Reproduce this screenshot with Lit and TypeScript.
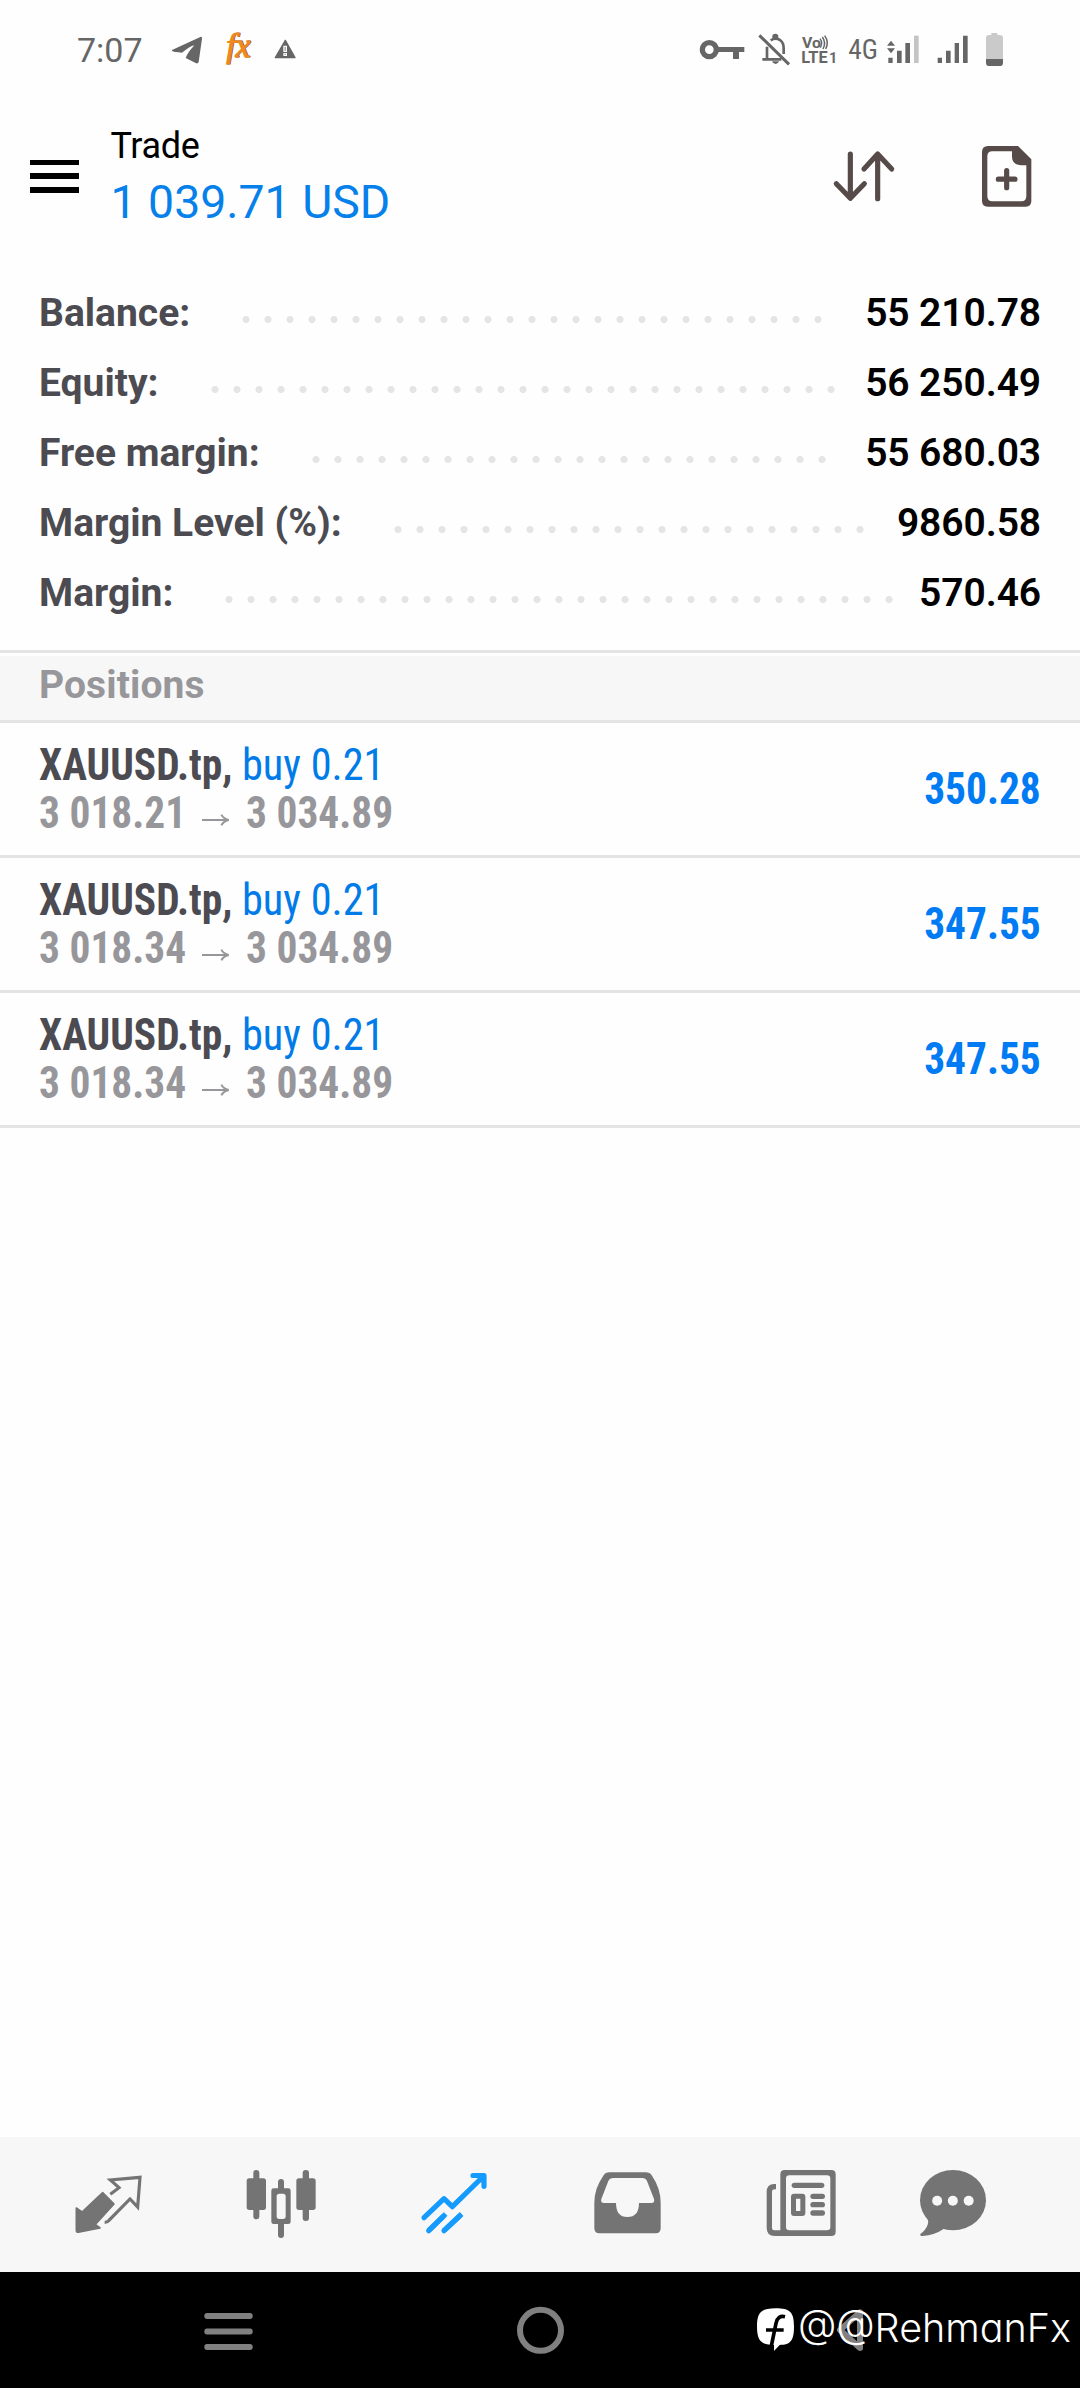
import { LitElement, html, css, svg, TemplateResult, SVGTemplateResult } from "lit";
import { customElement } from "lit/decorators.js";

interface SummaryRow { label: string; value: string; dots: number; }
interface Position { symbol: string; side: string; open: string; current: string; profit: string; }

const SUMMARY: SummaryRow[] = [
  { label: "Balance:", value: "55 210.78", dots: 27 },
  { label: "Equity:", value: "56 250.49", dots: 29 },
  { label: "Free margin:", value: "55 680.03", dots: 24 },
  { label: "Margin Level (%):", value: "9860.58", dots: 22 },
  { label: "Margin:", value: "570.46", dots: 31 },
];

const POSITIONS: Position[] = [
  { symbol: "XAUUSD.tp,", side: "buy 0.21", open: "3 018.21", current: "3 034.89", profit: "350.28" },
  { symbol: "XAUUSD.tp,", side: "buy 0.21", open: "3 018.34", current: "3 034.89", profit: "347.55" },
  { symbol: "XAUUSD.tp,", side: "buy 0.21", open: "3 018.34", current: "3 034.89", profit: "347.55" },
];

/* Icons are drawn on a grid of three units per pixel. */
const icon = (x: number, y: number, w: number, h: number, body: SVGTemplateResult, cls = ""): TemplateResult =>
  html`<svg class=${cls} width=${w} height=${h} viewBox="${x} ${y} ${w * 3} ${h * 3}">${body}</svg>`;

const statusLeft = icon(45, -60, 150, 100, svg`
  <path fill="#666" d="M66 90 L151 51 Q157 49 156 56 L146 126 Q143 133 137 129 L107 114 Q112 98 132 77 Q128 73 96 98 L86 97 Q74 97 66 93 Z"/>
  <text x="231" y="112" class="fx fx-shadow" textLength="72" lengthAdjust="spacingAndGlyphs">fx</text>
  <text x="229" y="110" class="fx" textLength="72" lengthAdjust="spacingAndGlyphs">fx</text>
  <path fill="#666" stroke="#666" stroke-width="4" stroke-linejoin="round" d="M406 61 L435 113 H376 Z"/>
  <path fill="#fff" d="M400 77h11v19h-11zM400 99h11v9h-11z"/>
  <path fill="#888" d="M404 80h3v13h-3zM404 101h3v4h-3z"/>`);

const statusRight = icon(27, -60, 310, 100, svg`
  <g fill="#666">
    <circle cx="58" cy="89" r="21" fill="none" stroke="#666" stroke-width="16"/>
    <path d="M82 81h81v15h-16v21h-18v-21h-47z"/>
    <g fill="none" stroke="#666" stroke-width="8">
      <path d="M217 118H274M231 118V80M242 61Q256 52 270 60Q281 68 281 84V102"/>
      <path d="M208 46L297 133" stroke-width="9"/>
    </g>
    <path d="M247 58V49a9 8 0 0 1 18 0V58zM246 124h21q-2 8-10 8t-11-8z"/>
    <text x="336" y="84" class="vo" textLength="57" lengthAdjust="spacingAndGlyphs">Vo</text>
    <path d="M390 56Q399 68 391 83M397 51Q409 67 399 87M404 47Q418 66 407 87" fill="none" stroke="#666" stroke-width="4.500"/>
    <text x="334" y="129" class="lte" textLength="79" lengthAdjust="spacingAndGlyphs">LTE</text>
    <text x="417" y="129" class="one" textLength="25" lengthAdjust="spacingAndGlyphs">1</text>
    <text x="475" y="118" class="net" textLength="89" lengthAdjust="spacingAndGlyphs">4G</text>
    <path d="M603 62l12 15h-24zM603 100l12-15h-24zM595 113h13v16h-13zM621 92h14v37h-14zM646 69h14v60h-14z"/>
    <path fill="#c4c4c4" d="M672 47h14v82h-14z"/>
    <path d="M743 113h13v16h-13zM768 92h14v37h-14zM794 69h13v60h-13zM819 47h14v82h-14z"/>
    <path fill="#cacaca" d="M888 118V55q0-10 10-10h6v-6h18v6h7q10 0 10 10v63z"/>
    <path d="M888 117h51v11q0 10-10 10h-31q-10 0-10-10z"/>
  </g>`);

const sortIcon = icon(516, 437, 69, 60, svg`
  <path fill="none" stroke="#564b48" stroke-width="15.500" stroke-linecap="round" stroke-linejoin="round"
    d="M574 461V593M532 550L574 594L616 550M656 595V462M615 506L656 461L698 506"/>`);

const newOrderIcon = icon(961, 428, 57, 66, svg`
  <path fill="#564b48" fill-rule="evenodd" d="M988 437H1078L1118 477V602Q1118 619 1101 619H987Q970 619 970 602V455Q970 437 988 437ZM1001 453Q986 453 986 468V588Q986 603 1001 603H1088Q1103 603 1103 588V495H1086Q1061 493 1060 470V453Z"/>
  <path fill="none" stroke="#564b48" stroke-width="15.500" stroke-linecap="round" d="M1044 511V562M1019 536.500H1069"/>`);

const arrow = icon(0, 0, 29, 14, svg`
  <path d="M0 21H78M58 5Q64 17 80 21Q64 25 58 37" fill="none" stroke="#97979b" stroke-width="6"/>`);

const quotes = icon(-54, 21, 173, 135, svg`
  <path fill="#747474" stroke="#747474" stroke-width="5" stroke-linejoin="round"
    d="M188 188L222 222L166 283L180 294L115 306.500Q109 307 109 301V234L126 246Z"/>
  <path fill="none" stroke="#747474" stroke-width="9.500" d="M194 277Q203 277 207 271L270 207L293 231L300 142L211 150L237 173L211 193"/>`);

const charts = icon(465, 21, 173, 135, svg`
  <g fill="#747474">
    <rect x="620" y="145" width="58" height="95" rx="8"/><rect x="640" y="120" width="18" height="148" rx="9"/>
    <rect x="769" y="145" width="58" height="95" rx="8"/><rect x="788" y="120" width="19" height="153" rx="9"/>
    <rect x="714" y="147" width="18" height="40" rx="9"/><rect x="714" y="270" width="18" height="54" rx="9"/>
    <rect x="694" y="175" width="58" height="107" rx="7"/>
    <rect x="710" y="191" width="27" height="76" rx="8" fill="#f7f7f7"/>
  </g>`);

const trade = icon(984, 21, 173, 135, svg`
  <g fill="none" stroke="#149bfd" stroke-width="15.500">
    <path stroke-linecap="round" stroke-linejoin="round" d="M1152 263L1212 206L1237 230L1328 141M1299 136.500H1332V169"/>
    <path d="M1310 140H1328V158Z" fill="#149bfd" stroke-width="4"/>
    <path d="M1166 302L1217 252M1212 302L1265 252"/>
    <path stroke-linecap="round" d="M1166 302L1210 259M1212 302L1258 259"/>
  </g>`);

const history = icon(-57, 21, 173, 135, svg`
  <path fill="#747474" fill-rule="evenodd" d="M148 127H257Q269 127 276 137Q302 175 302 218V295Q302 310 287 310H118Q103 310 103 295V218Q103 175 130 137Q137 127 148 127ZM160 144Q149 144 145 153L124 207Q121 219 132 219H168Q168 261 202 261Q237 261 237 219H274Q285 219 282 207L261 153Q257 144 247 144Z"/>`);

const news = icon(462, 21, 173, 135, svg`
  <g fill="#747474">
    <path d="M648 162V178H644Q636 178 636 186V294Q636 301 643 301H664V318H644Q620 318 620 293V186Q620 162 643 162Z"/>
    <path fill-rule="evenodd" d="M674 120H814Q827 120 827 133V305Q827 318 814 318H661V133Q661 120 674 120ZM688 136Q678 136 678 146V291Q678 301 688 301H801Q811 301 811 291V146Q811 136 801 136Z"/>
    <rect x="695" y="158" width="98" height="16" rx="8"/>
    <path fill-rule="evenodd" d="M702 191H727Q736 191 736 200V249Q736 258 727 258H702Q693 258 693 249V200Q693 191 702 191ZM708 206V243H721V206Z"/>
    <rect x="751" y="191" width="44" height="16" rx="8"/><rect x="751" y="216" width="44" height="16" rx="8"/><rect x="751" y="241" width="44" height="16" rx="8"/>
  </g>`);

const chat = icon(981, 21, 131, 135, svg`
  <g fill="#747474">
    <ellipse cx="1179" cy="210.500" rx="99" ry="90.500"/>
    <path d="M1098 262Q1108 271 1103 284Q1097 301 1081 312Q1079 318 1088 318Q1124 315 1152 296Z"/>
    <g fill="#f7f7f7"><circle cx="1131.500" cy="212" r="15"/><circle cx="1178.500" cy="212" r="15"/><circle cx="1226" cy="212" r="15"/></g>
  </g>`);

const recents = icon(68, 123, 51, 41, svg`
  <g fill="#808080"><rect x="72" y="129" width="145" height="18" rx="8"/><rect x="72" y="175.500" width="145" height="18" rx="8"/><rect x="72" y="222" width="145" height="18" rx="8"/></g>`);
const home = icon(1008, 108, 49, 49, svg`<circle cx="1081.500" cy="181" r="61.500" fill="none" stroke="#808080" stroke-width="18"/>`);
const back = icon(402, 108, 33, 49, svg`
  <path d="M420 180L480 127V234Z" fill="none" stroke="#808080" stroke-width="18" stroke-linejoin="round"/>`);

const fLogo = icon(172, 114, 40, 46, svg`
  <path fill="#fff" d="M231 118C274 118 286 130 286 172C286 214 277 228 242 228L226 245L226 228C186 228 175 214 175 172C175 130 188 118 231 118Z"/>
  <path fill="none" stroke="#000" stroke-width="11" d="M259 143Q237 138 232 163L217 236M202 183H255"/>
  <path fill="#fff" d="M232 226H245L226 245Z"/>`);

@customElement("app-root")
export class AppRoot extends LitElement {
  static styles = css`
    :host { display: block; }
    svg { display: block; flex: none; }
    .screen {
      position: relative; display: flex; flex-direction: column;
      width: 1080px; height: 2388px; overflow: hidden;
      background: #fefefe; font-family: Roboto, sans-serif; color: #000;
    }
    .status { display: flex; height: 100px; padding-left: 77px; color: #666; }
    .time { width: 88px; font-size: 34px; line-height: 100px; }
    .spacer { flex: 1; }
    .status-right { display: flex; margin-right: 71px; }
    .fx { font: italic 400 100px "Liberation Serif", serif; fill: #f08a1d; stroke: #f08a1d; stroke-width: 3px; }
    .fx-shadow { fill: #8a4a12; stroke: #8a4a12; }
    .vo { font: 700 43px Roboto, sans-serif; }
    .lte { font: 700 47px Roboto, sans-serif; }
    .one { font: 700 44px Roboto, sans-serif; }
    .net { font: 400 84px Roboto, sans-serif; font-stretch: 75%; }

    .header { display: flex; height: 178px; padding-left: 29.5px; }
    .burger { display: flex; flex-direction: column; gap: 8.3px; width: 49.5px; padding-top: 59.5px; }
    .burger i { height: 5.6px; background: #000; }
    .titles { flex: 1; padding: 25px 0 0 31.5px; }
    .title { font-size: 36px; line-height: 42px; letter-spacing: -0.3px; }
    .total { margin-top: 7px; font-size: 46.4px; line-height: 56px; color: #0680ea; white-space: pre; }
    .actions { display: flex; gap: 79px; padding: 43px 44px 0 0; }
    .actions svg:first-child { margin-top: 3px; }

    .summary { display: flex; flex-direction: column; height: 372px; }
    .row { display: flex; align-items: center; height: 70px; padding: 0 39px; }
    .label { font-size: 39px; font-weight: 700; color: #4b4b51; }
    .dots {
      height: 7px; margin: 13px 0 0 45px; flex: none;
      background: radial-gradient(circle at 11px 3.5px, #e5e5e5 3.2px, transparent 3.9px) 0 0 / 22px 7px repeat-x;
    }
    .value { margin-left: auto; font-size: 39px; font-weight: 600; letter-spacing: -0.1px; }

    .section {
      box-sizing: border-box; height: 73px; border-top: 3px solid #e4e4e4; border-bottom: 3px solid #e4e4e4;
      padding: 0 39px; box-shadow: inset 0 3px #fefefe; background: #f7f7f7;
      font-size: 39px; font-weight: 700; line-height: 64px; color: #97979b; letter-spacing: 0.1px;
    }
    .position {
      box-sizing: border-box; display: flex; justify-content: space-between; height: 135px;
      border-bottom: 3px solid #e4e4e4; padding: 18px 39px 0;
      font-size: 45px; font-stretch: 75%; line-height: 48px;
    }
    .line { display: grid; grid-template-columns: 203px auto; }
    .prices { display: grid; grid-template-columns: 163px 44px auto; align-items: center; color: #97979b; }
    .prices svg { margin-top: 14px; }
    .narrow { display: block; transform: scaleX(0.92); transform-origin: 0 50%; white-space: nowrap; font-weight: 700; }
    .symbol { color: #4b4b51; }
    .side { color: #007be8; font-weight: 400; transform: scaleX(0.94); }
    .profit { color: #007bf3; line-height: 96px; transform-origin: 100% 50%; }

    .blank { flex: 1; }
    .tabs { display: flex; height: 135px; padding-left: 22px; background: #f7f7f7; }
    .system { display: flex; height: 116px; background: #000; }
    .system .recents { margin: 39px 0 0 202.7px; }
    .system .home { margin: 34px 0 0 262.3px; }
    .system .back { margin: 34px 0 0 269px; }
    .credit { position: absolute; right: 9px; bottom: 30px; display: flex; align-items: center; color: #fff; }
    .credit svg { margin-top: 4px; }
    .handle { margin-left: 2px; font: 300 39.5px/60px Inter, sans-serif; font-feature-settings: "cv11"; }
  `;

  render() {
    return html`
      <div class="screen">
        <div class="status">
          <span class="time">7:07</span>
          ${statusLeft}
          <span class="spacer"></span>
          <div class="status-right">${statusRight}</div>
        </div>
        <header class="header">
          <div class="burger"><i></i><i></i><i></i></div>
          <div class="titles">
            <div class="title">Trade</div>
            <div class="total">1 039.71 USD</div>
          </div>
          <div class="actions">${sortIcon}${newOrderIcon}</div>
        </header>
        <section class="summary">
          ${SUMMARY.map((r) => html`
            <div class="row">
              <span class="label">${r.label}</span>
              <span class="dots" style="width:${r.dots * 22}px"></span>
              <span class="value">${r.value}</span>
            </div>`)}
        </section>
        <div class="section">Positions</div>
        ${POSITIONS.map((p) => html`
          <div class="position">
            <div>
              <div class="line"><span class="narrow symbol">${p.symbol}</span><span class="narrow side">${p.side}</span></div>
              <div class="prices"><span class="narrow">${p.open}</span>${arrow}<span class="narrow">${p.current}</span></div>
            </div>
            <span class="narrow profit">${p.profit}</span>
          </div>`)}
        <div class="blank"></div>
        <nav class="tabs">${quotes}${charts}${trade}${history}${news}${chat}</nav>
        <div class="system">
          <div class="recents">${recents}</div>
          <div class="home">${home}</div>
          <div class="back">${back}</div>
        </div>
        <div class="credit">${fLogo}<span class="handle">@@RehmanFx</span></div>
      </div>`;
  }
}
